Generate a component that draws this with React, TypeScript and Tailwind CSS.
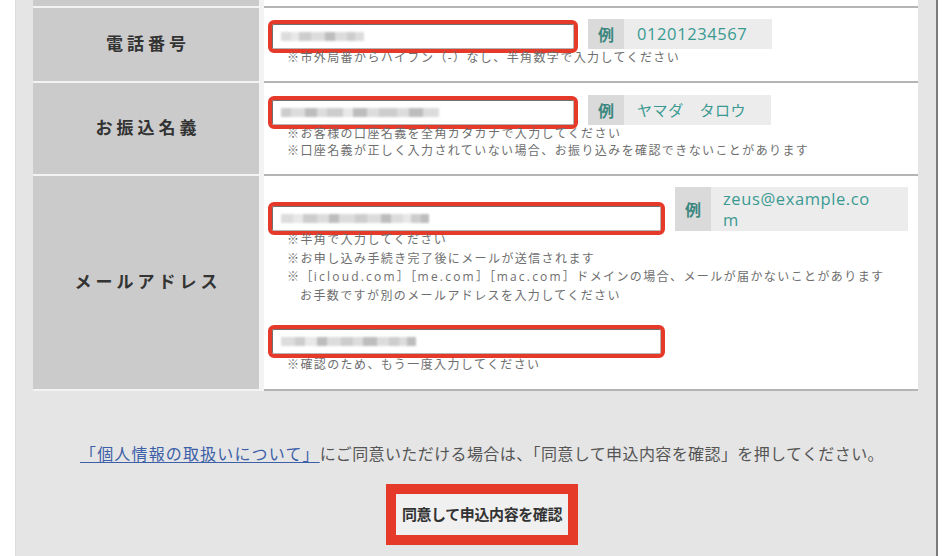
import React from "react";

type Block = [number, string];

// Pixelated placeholder for personal data already typed into a field
function Masked({ blocks }: { blocks: Block[] }) {
  return (
    <div className="flex h-[9px] items-center blur-[0.9px]">
      {blocks.map(([w, c], i) => (
        <span key={i} className="h-full" style={{ width: w, background: c }} />
      ))}
    </div>
  );
}

function Field({ className, blocks }: { className: string; blocks: Block[] }) {
  return (
    <div
      className={
        "flex h-[25px] shrink-0 items-center rounded-[2px] border border-[#b5b5b5] border-l-[#707070] border-t-[#707070] bg-white pl-[8px] outline-4 outline-solid outline-[#e5392a] " +
        className
      }
    >
      <Masked blocks={blocks} />
    </div>
  );
}

function Example({ children, wide }: { children: React.ReactNode; wide?: boolean }) {
  return (
    <div className={"flex shrink-0 bg-[#ececec] " + (wide ? "h-[44px]" : "h-[30px]")}>
      <div className="flex w-[36px] items-center justify-center bg-[#dadada] font-['Noto_Sans_CJK_JP',sans-serif] text-[16px] font-bold text-[#3c8880]">
        例
      </div>
      {children}
    </div>
  );
}

function Hint({ children, className = "" }: { children: React.ReactNode; className?: string }) {
  return (
    <p
      className={
        "font-['Open_Sans','Noto_Sans_CJK_JP',sans-serif] text-[12px] tracking-[1.4px] text-[#6e6e6e] " +
        className
      }
    >
      {children}
    </p>
  );
}

function Label({ text, h }: { text: string; h: string }) {
  return (
    <div
      className={
        "mb-[2px] flex items-center justify-center bg-[#cbcbcb] pb-[4px] pl-[4px] font-['Noto_Sans_CJK_JP',sans-serif] text-[17px] font-bold tracking-[4px] text-[#333] " +
        h
      }
    >
      {text}
    </div>
  );
}

const g1 = "#dcdcdc";
const g2 = "#cdcdcd";
const g3 = "#bdbdbd";
const g4 = "#e8e8e8";

export default function App() {
  return (
    <div className="flex h-[556px] w-[952px] overflow-hidden bg-white">
      <div className="w-[15px] shrink-0" />
      <div className="flex w-[923px] shrink-0 flex-col border-l border-r-2 border-l-[#dcdcdc] border-r-[#7c7c7c] bg-[#e5e5e5]">
        <div className="pl-[17px] pr-[18px]">
          <div className="grid grid-cols-[226px_1fr] gap-x-[5px] bg-[#f3f3f3]">
            {/* row continuing from above */}
            <div className="mb-[2px] h-[6px] bg-[#cbcbcb]" />
            <div className="border-b-2 border-[#b4b4b4] bg-white" />

            {/* phone */}
            <Label text="電話番号" h="h-[73px]" />
            <div className="border-b-2 border-[#b4b4b4] bg-white pl-[8px] pt-[11px]">
              <div className="flex items-end gap-[14px]">
                <Field
                  className="w-[302px]"
                  blocks={[
                    [10, g1],
                    [8, g4],
                    [12, g2],
                    [14, g1],
                    [10, g3],
                    [12, g1],
                    [8, g2],
                    [9, g1],
                  ]}
                />
                <Example>
                  <div className="flex items-center pl-[13px] pr-[25px] font-['Open_Sans',sans-serif] text-[16.5px] tracking-[0.6px] text-[#3a9a92]">
                    01201234567
                  </div>
                </Example>
              </div>
              <Hint className="pl-[15px] leading-[18px]">
                ※市外局番からハイフン（-）なし、半角数字で入力してください
              </Hint>
            </div>

            {/* bank account name */}
            <Label text="お振込名義" h="h-[91px]" />
            <div className="border-b-2 border-[#b4b4b4] bg-white pl-[8px] pt-[12px]">
              <div className="flex items-end gap-[14px]">
                <Field
                  className="w-[302px]"
                  blocks={[
                    [10, g2],
                    [14, g1],
                    [12, g3],
                    [10, g1],
                    [16, g2],
                    [10, g4],
                    [14, g3],
                    [12, g1],
                    [18, g2],
                    [12, g1],
                    [14, g3],
                    [16, g1],
                  ]}
                />
                <Example>
                  <div className="flex items-center pl-[13px] pr-[25px] font-['Noto_Sans_CJK_JP',sans-serif] text-[15px] tracking-[0.6px] text-[#3a9a92]">
                    ヤマダ　タロウ
                  </div>
                </Example>
              </div>
              <Hint className="pl-[15px] leading-[17px]">※お客様の口座名義を全角カタカナで入力してください</Hint>
              <Hint className="pl-[15px] leading-[17px]">
                ※口座名義が正しく入力されていない場合、お振り込みを確認できないことがあります
              </Hint>
            </div>

            {/* e-mail */}
            <Label text="メールアドレス" h="h-[213px]" />
            <div className="border-b-2 border-[#b4b4b4] bg-white pl-[8px] pt-[11px]">
              <div className="flex items-end gap-[14px]">
                <Field
                  className="w-[389px]"
                  blocks={[
                    [12, g1],
                    [10, g4],
                    [14, g2],
                    [12, g1],
                    [10, g3],
                    [16, g1],
                    [12, g2],
                    [14, g1],
                    [10, g3],
                    [12, g1],
                    [8, g4],
                    [10, g2],
                    [8, g3],
                  ]}
                />
                <Example wide>
                  <div className="w-[197px] break-all py-[1px] pl-[12px] pr-[35px] font-['Open_Sans',sans-serif] text-[16.5px] leading-[21px] tracking-[0.6px] text-[#3a9a92]">
                    zeus@example.com
                  </div>
                </Example>
              </div>
              <div className="leading-[18.5px]">
                <Hint className="pl-[15px]">※半角で入力してください</Hint>
                <Hint className="pl-[15px]">※お申し込み手続き完了後にメールが送信されます</Hint>
                <Hint className="-indent-[13px] pl-[28px]">
                  ※［<span className="tracking-[2.2px]">icloud.com</span>］［
                  <span className="tracking-[2.2px]">me.com</span>］［
                  <span className="tracking-[2.2px]">mac.com</span>］ドメインの場合、メールが届かないことがあります
                  <br />
                  お手数ですが別のメールアドレスを入力してください
                </Hint>
              </div>
              <div className="mt-[24px]">
                <Field
                  className="w-[389px]"
                  blocks={[
                    [14, g1],
                    [10, g2],
                    [12, g4],
                    [10, g3],
                    [14, g1],
                    [12, g2],
                    [10, g1],
                    [14, g3],
                    [12, g1],
                    [10, g2],
                    [8, g1],
                    [9, g3],
                  ]}
                />
              </div>
              <Hint className="mt-[2px] pl-[15px] leading-[18px]">※確認のため、もう一度入力してください</Hint>
            </div>
          </div>
        </div>

        {/* consent and confirm */}
        <div className="flex flex-col items-center pt-[50px] font-['Noto_Sans_CJK_JP',sans-serif]">
          <p className="ml-[12px] text-[16px] leading-[24px] tracking-[0.4px] text-[#555]">
            <a className="tracking-[1.15px] text-[#3c5fa8] underline underline-offset-[2px]">
              「個人情報の取扱いについて」
            </a>
            にご同意いただける場合は、「同意して申込内容を確認」を押してください。
          </p>
          <button className="ml-[12px] mt-[19px] flex h-[61px] w-[192px] items-center justify-center border-[10px] border-[#e5392a] bg-[#f0f0f0] text-[15px] font-bold tracking-[-0.4px] text-[#333]">
            同意して申込内容を確認
          </button>
        </div>
      </div>
    </div>
  );
}
